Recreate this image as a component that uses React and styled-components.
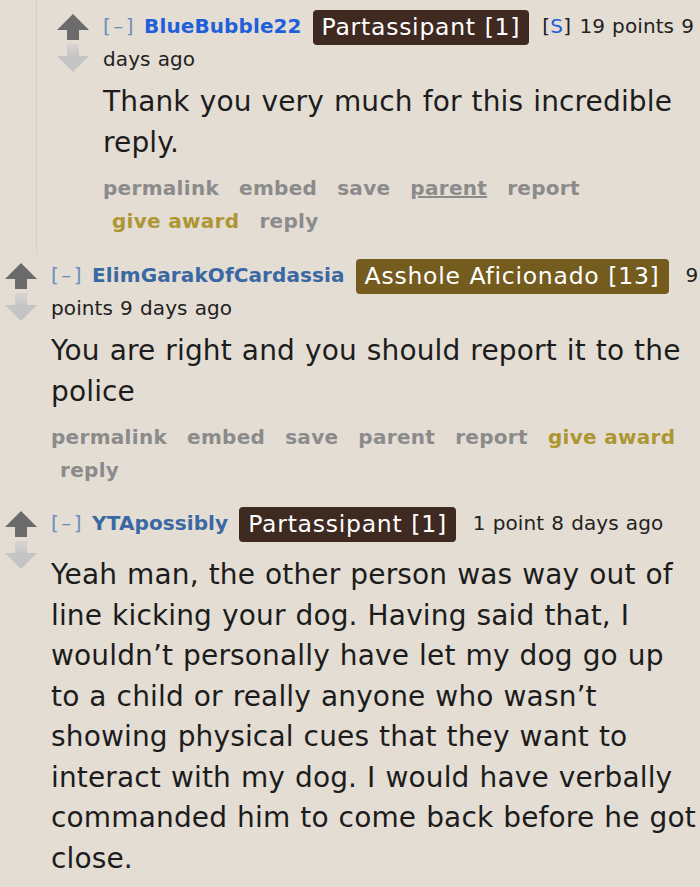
import React from "react";
import styled, { createGlobalStyle } from "styled-components";

const GlobalStyle = createGlobalStyle`
  body {
    margin: 0;
    background: #e4ddd3;
    font-family: "DejaVu Sans", Verdana, sans-serif;
    color: #222;
  }
`;

const UpArrow = () => (
  <svg width="32" height="26" viewBox="0 0 32 26">
    <polygon points="16,0 32,16 22,16 22,26 10,26 10,16 0,16" fill="#6b6b6b" />
  </svg>
);

const DownArrow = () => (
  <svg width="32" height="28" viewBox="0 0 32 28">
    <defs>
      <linearGradient id="fade" x1="0" y1="0" x2="0" y2="1">
        <stop offset="0" stopColor="#d9d6d1" />
        <stop offset="0.45" stopColor="#c4c4c4" />
      </linearGradient>
    </defs>
    <polygon points="10,0 22,0 22,12 32,12 16,28 0,12 10,12" fill="url(#fade)" />
  </svg>
);

const Comment = ({ author, submitter, flair, flairBg, score, time, body, hoverParent, bodyGap }) => (
  <CommentRow>
    <Votes>
      <UpArrow />
      <DownArrow />
    </Votes>
    <Entry>
      <Tagline>
        <Expand>[–]</Expand>
        <Author submitter={submitter}>{author}</Author>
        <Flair bg={flairBg}>{flair}</Flair>
        {submitter && (
          <Submitter>
            [<b>S</b>]
          </Submitter>
        )}
        <Meta>
          {score} {time}
        </Meta>
      </Tagline>
      <Body gap={bodyGap}>{body}</Body>
      <Buttons>
        <ButtonItem>permalink</ButtonItem>
        <ButtonItem>embed</ButtonItem>
        <ButtonItem>save</ButtonItem>
        <ButtonItem underline={hoverParent}>parent</ButtonItem>
        <ButtonItem>report</ButtonItem>
        <ButtonItem gold>give award</ButtonItem>
        <ButtonItem>reply</ButtonItem>
      </Buttons>
    </Entry>
  </CommentRow>
);

const App = () => {
  return (
    <Page>
      <GlobalStyle />
      <ChildThread>
        <Comment
          author="BlueBubble22"
          submitter
          flair="Partassipant [1]"
          flairBg="#3f2a22"
          score="19 points"
          time="9 days ago"
          body="Thank you very much for this incredible reply."
          hoverParent
        />
      </ChildThread>
      <Comment
        author="ElimGarakOfCardassia"
        flair="Asshole Aficionado [13]"
        flairBg="#745b1e"
        score="9 points"
        time="9 days ago"
        body="You are right and you should report it to the police"
      />
      <Comment
        author="YTApossibly"
        flair="Partassipant [1]"
        flairBg="#3f2a22"
        score="1 point"
        time="8 days ago"
        bodyGap={15}
        body="Yeah man, the other person was way out of line kicking your dog. Having said that, I wouldn’t personally have let my dog go up to a child or really anyone who wasn’t showing physical cues that they want to interact with my dog. I would have verbally commanded him to come back before he got close."
      />
    </Page>
  );
};

export default App;

// 전체 페이지
const Page = styled.div`
  width: 700px;
  min-height: 887px;
  overflow: hidden;
`;

// 답글 들여쓰기
const ChildThread = styled.div`
  margin-left: 36px;
  padding-top: 6px;
  padding-bottom: 1px;
  padding-left: 20px;
  border-left: 1px solid #d4d0d8;
`;

const CommentRow = styled.div`
  display: flex;
  gap: 14px;
  padding: 4px 0 16px 5px;
  ${ChildThread} & {
    padding-left: 0;
  }
`;

const Votes = styled.div`
  display: flex;
  flex-direction: column;
  align-items: center;
  gap: 4px;
  width: 32px;
  flex-shrink: 0;
  padding-top: 4px;
`;

const Entry = styled.div`
  flex: 1;
  min-width: 0;
`;

const Tagline = styled.div`
  font-size: 20px;
  line-height: 33px;
  color: #222;
  letter-spacing: 0.1px;
  word-spacing: 0.6px;
`;

const Expand = styled.span`
  color: #6d8dbb;
  letter-spacing: 2.5px;
  margin-right: 8px;
`;

const Author = styled.span`
  font-weight: bold;
  color: ${(props) => (props.submitter ? "#1f5fd9" : "#3a68a3")};
  margin-right: 11px;
`;

const Flair = styled.span`
  display: inline-block;
  background: ${(props) => props.bg};
  color: #fff;
  font-size: 23.5px;
  letter-spacing: 0.75px;
  height: 35px;
  line-height: 35px;
  padding: 0 9px;
  border-radius: 4px;
  margin: 0 13px -2px 0;
  vertical-align: top;
`;

const Submitter = styled.span`
  margin-right: 4px;
  letter-spacing: 0.3px;
  b {
    font-weight: normal;
    color: #1f5fd9;
  }
`;

const Meta = styled.span`
  margin-left: 4px;
`;

const Body = styled.div`
  font-size: 28px;
  line-height: 40.5px;
  letter-spacing: 0.15px;
  word-spacing: 0.9px;
  color: #1c1c1c;
  margin: ${(props) => props.gap || 6}px 0 9px;
`;

const Buttons = styled.ul`
  list-style: none;
  margin: 0;
  padding: 0;
  display: flex;
  flex-wrap: wrap;
  font-size: 20px;
  font-weight: bold;
  letter-spacing: 0.3px;
  line-height: 33px;
`;

const ButtonItem = styled.li`
  margin-right: 11px;
  color: ${(props) => (props.gold ? "#ad9633" : "#8b8b8b")};
  text-decoration: ${(props) => (props.underline ? "underline" : "none")};
  & + & {
    padding-left: 9px;
  }
`;
